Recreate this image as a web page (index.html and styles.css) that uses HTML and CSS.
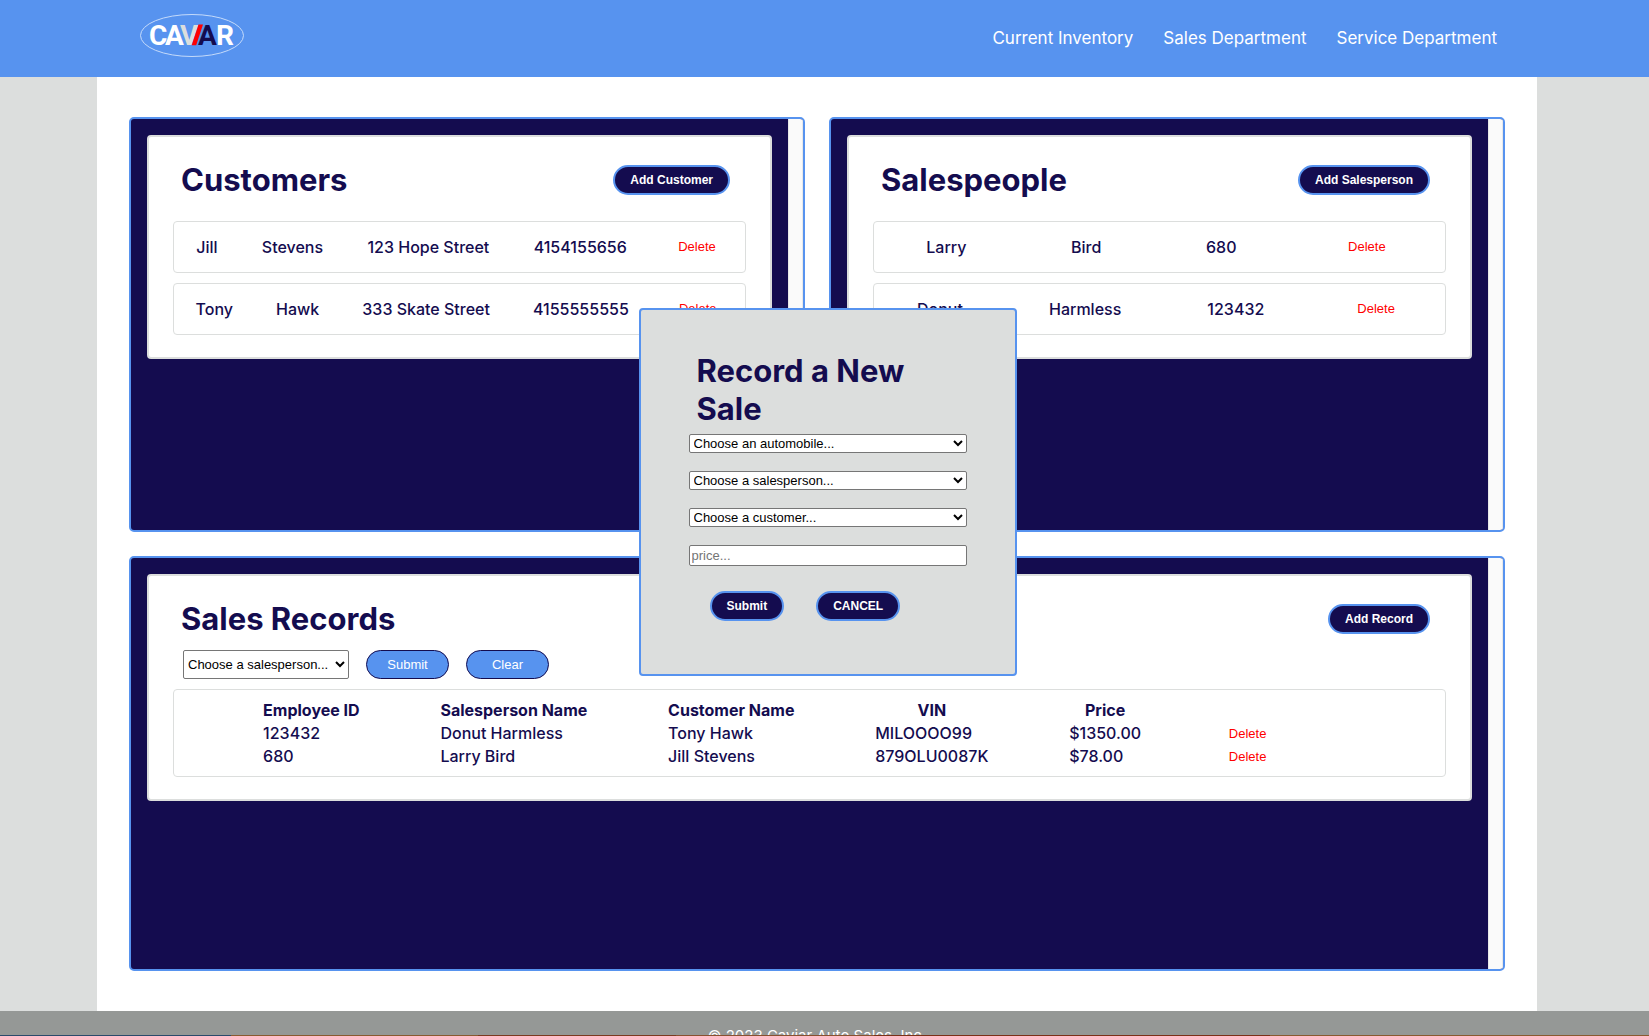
FILE: index.html
```html
<!DOCTYPE html>
<html lang="en">
<head>
<meta charset="utf-8">
<title>Caviar Sales Department</title>
<link rel="stylesheet" href="styles.css">
</head>
<body>
<header class="topbar">
  <div class="topbar-inner">
    <a href="#" class="logo" aria-label="Caviar home">
      <svg width="104" height="44" viewBox="0 0 104 44">
        <ellipse cx="52" cy="21.5" rx="51.5" ry="21" fill="none" stroke="#c4dafa" stroke-width="1"/>
        <g class="logo-text">
          <text x="9" y="31" fill="#fff">C</text>
          <text x="25" y="31" fill="#fff">A</text>
          <text x="40" y="31" fill="#dcdedd">V</text>
          <text x="58" y="31" fill="#140c4f">A</text>
          <text x="76" y="31" fill="#fff">R</text>
        </g>
        <path d="M58.500 10.500h4.500l-6.800 20.700h-4.500z" fill="#f00"/>
      </svg>
    </a>
    <nav class="nav">
      <a href="#">Current Inventory</a>
      <a href="#">Sales Department</a>
      <a href="#">Service Department</a>
    </nav>
  </div>
</header>

<main class="page">
  <div class="content">
    <section class="panel">
      <div class="panel-body">
        <div class="card">
          <div class="card-head"><h1>Customers</h1><button class="pill">Add Customer</button></div>
          <ul class="rows">
            <li><span>Jill</span><span>Stevens</span><span>123 Hope Street</span><span>4154155656</span><button class="delete">Delete</button></li>
            <li><span>Tony</span><span>Hawk</span><span>333 Skate Street</span><span>4155555555</span><button class="delete">Delete</button></li>
          </ul>
        </div>
      </div>
      <div class="track"></div>
    </section>
    <section class="panel">
      <div class="panel-body">
        <div class="card">
          <div class="card-head"><h1>Salespeople</h1><button class="pill">Add Salesperson</button></div>
          <ul class="rows">
            <li><span>Larry</span><span>Bird</span><span>680</span><button class="delete">Delete</button></li>
            <li><span>Donut</span><span>Harmless</span><span>123432</span><button class="delete">Delete</button></li>
          </ul>
        </div>
      </div>
      <div class="track"></div>
    </section>
    <section class="panel panel-wide">
      <div class="panel-body">
        <div class="card">
          <div class="card-head card-head-tight"><h1>Sales Records</h1><button class="pill">Add Record</button></div>
          <form class="filter">
            <select class="select filter-select" aria-label="Salesperson"><option>Choose a salesperson...</option></select>
            <button type="button" class="filter-button">Submit</button>
            <button type="button" class="filter-button">Clear</button>
          </form>
          <div class="records">
            <table>
              <thead>
                <tr><th>Employee ID</th><th>Salesperson Name</th><th>Customer Name</th><th>VIN</th><th>Price</th><td></td></tr>
              </thead>
              <tbody>
                <tr><td>123432</td><td>Donut Harmless</td><td>Tony Hawk</td><td>MILOOOO99</td><td>$1350.00</td><td><button class="delete">Delete</button></td></tr>
                <tr><td>680</td><td>Larry Bird</td><td>Jill Stevens</td><td>879OLU0087K</td><td>$78.00</td><td><button class="delete">Delete</button></td></tr>
              </tbody>
            </table>
          </div>
        </div>
      </div>
      <div class="track"></div>
    </section>
  </div>
</main>

<footer class="footer"><p>© 2023 Caviar Auto Sales, Inc.</p></footer>
<div class="edge"></div>

<div class="modal" role="dialog" aria-labelledby="modal-title">
  <form class="modal-form">
    <h1 id="modal-title">Record a New Sale</h1>
    <select class="select" aria-label="Automobile"><option>Choose an automobile...</option></select>
    <select class="select" aria-label="Salesperson"><option>Choose a salesperson...</option></select>
    <select class="select" aria-label="Customer"><option>Choose a customer...</option></select>
    <input class="price" type="text" placeholder="price..." aria-label="Price">
    <div class="modal-actions">
      <button type="button" class="pill">Submit</button>
      <button type="button" class="pill">CANCEL</button>
    </div>
  </form>
</div>
</body>
</html>
```
FILE: styles.css
```css
:root {
  --navy: #140c4f;
  --blue: #5793ef;
  --grey: #dcdedd;
  --gutter: 15px;
}
* { box-sizing: border-box; }
body {
  margin: 0;
  height: 100vh;
  overflow: hidden;
  background: var(--grey);
  color: var(--navy);
  font-family: Inter, "Liberation Sans", sans-serif;
  font-size: 16px;
  line-height: 23px;
}
h1 { margin: 0; font-size: 31px; line-height: 38px; font-weight: 700; }
button, select, input { font-family: "Liberation Sans", Arial, sans-serif; font-size: 13px; margin: 0; }

.topbar { background: var(--blue); padding-right: var(--gutter); }
.topbar-inner {
  max-width: 1440px;
  height: 77px;
  margin: 0 auto;
  padding: 14px 40px 0 43px;
  display: flex;
  justify-content: space-between;
}
.logo, .logo svg { display: block; }
.logo-text { font-family: Roboto, sans-serif; font-size: 28px; font-weight: 700; }
.nav { display: flex; gap: 30px; padding-top: 12px; }
.nav a { color: #fff; text-decoration: none; font-size: 17px; line-height: 24px; }

.page { padding-right: var(--gutter); }
.content {
  max-width: 1440px;
  margin: 0 auto;
  padding: 40px 32px;
  background: #fff;
  display: grid;
  grid-template-columns: 1fr 1fr;
  gap: 24px;
}
.panel {
  display: flex;
  min-height: 415px;
  border: 2px solid var(--blue);
  border-radius: 5px;
  background: var(--navy);
  overflow: hidden;
}
.panel-wide { grid-column: 1 / -1; }
.panel-body { flex: 1; padding: 16px; }
.track { width: 15px; background: #fafafa; border: 1px solid #e8e8e8; border-width: 0 1px; }
.card {
  background: #fff;
  border: 2px solid var(--grey);
  border-radius: 4px;
  padding: 0 24px 22px;
}
.card-head {
  display: flex;
  justify-content: space-between;
  align-items: center;
  padding: 24px 16px 22px 8px;
}
.card-head-tight { padding-bottom: 12px; }

.pill {
  height: 30px;
  padding: 0 15px;
  border: 2px solid var(--blue);
  border-radius: 15px;
  background: var(--navy);
  color: #fff;
  font-size: 12px;
  font-weight: 700;
}
.delete { border: 0; background: none; color: #f00; padding: 0 7px; line-height: 16px; }

.rows { list-style: none; margin: 0; padding: 0; display: grid; gap: 10px; }
.rows li {
  display: flex;
  justify-content: space-around;
  align-items: center;
  height: 52px;
  border: 1px solid var(--grey);
  border-radius: 4px;
  font-weight: 500;
}

.select {
  height: 19px;
  padding: 0;
  border: 1px solid #767676;
  border-radius: 2px;
  background: #fff;
  color: #000;
}
.filter { display: flex; gap: 17px; padding: 0 10px 10px; }
.filter-select { width: 166px; height: 29px; }
.filter-button {
  width: 83px;
  height: 29px;
  border: 1px solid var(--navy);
  border-radius: 15px;
  background: var(--blue);
  color: #fff;
}
.records { border: 1px solid var(--grey); border-radius: 4px; padding: 9px 0 8px 7%; }
.records table { border-collapse: collapse; font-weight: 500; }
.records th, .records td { height: 23px; padding: 0 4.9vw 0 0; white-space: nowrap; }
.records th { font-weight: 700; text-align: center; }
.records td:last-child { padding-right: 0; }
.records .delete { display: block; }

.footer { background: #959896; color: #fff; text-align: center; padding: 13px var(--gutter) 20px 0; }
.footer p { margin: 0; font-size: 15px; }
.edge {
  position: fixed;
  inset: auto 0 0 0;
  height: 1px;
  background: linear-gradient(90deg, #2b4a6b 14%, #8a5a30 14% 29%, #7c3a20 29% 41%, #8a5030 41% 53%, #7c3018 53% 77%, #8a5a30 77%);
}

.modal {
  position: fixed;
  top: 308px;
  left: calc(50% - 186px);
  width: 378px;
  height: 368px;
  padding: 42px 48px;
  border: 2px solid var(--blue);
  border-radius: 4px;
  background: var(--grey);
}
.modal-form { display: flex; flex-direction: column; gap: 18px; }
.modal-form h1 { padding: 0 8px; margin-bottom: -12px; }
.price { height: 21px; padding: 0 2px; border: 1px solid #767676; border-radius: 2px; }
.price::placeholder { color: #757575; }
.modal-actions { display: flex; gap: 32px; padding: 7px 21px 0; }
```
